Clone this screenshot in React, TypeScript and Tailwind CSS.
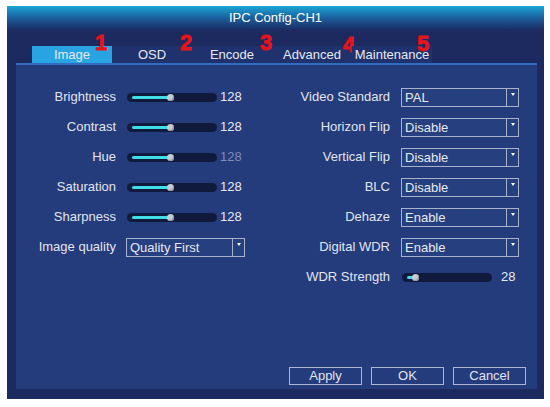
const font = { fontFamily: '"Liberation Sans", Arial, sans-serif' };

const tabs = [
  { name: "Image", mark: "1", pos: "left-[63px] top-[-14px]" },
  { name: "OSD", mark: "2", pos: "left-[68px] top-[-14px]" },
  { name: "Encode", mark: "3", pos: "left-[68px] top-[-14px]" },
  { name: "Advanced", mark: "4", pos: "left-[71px] top-[-12px]" },
  { name: "Maintenance", mark: "5", pos: "left-[65px] top-[-13px]" },
];

function Slider({ value, max = 255, dim = false, gap = "ml-[3px]" }: { value: number; max?: number; dim?: boolean; gap?: string }) {
  const fill = Math.round((value / max) * 76);
  return (
    <div className="flex items-center">
      <div className="relative h-[9px] w-[90px] rounded-full bg-[#101a3c]">
        <div className="absolute left-[5px] top-[3px] h-[3px] rounded-full bg-[#3fdde6]" style={{ width: fill }} />
        <div
          className="absolute top-[1px] h-[7px] w-[7px] rounded-full bg-[#c9ccd3] shadow-[inset_-1px_-1px_1px_#8f939c]"
          style={{ left: fill + 2 }}
        />
      </div>
      <span className={`${gap} ${dim ? "text-[#7f8db6]" : "text-[#e6e9f1]"}`}>{value}</span>
    </div>
  );
}

function Select({ value, width = "w-[118px]" }: { value: string; width?: string }) {
  return (
    <div className={`flex h-[19px] ${width} border border-[#a9b2cd] bg-[#26407f]`}>
      <span className="flex-1 pl-[3px] leading-[17px] text-[#e6e9f1]">{value}</span>
      <span className="flex w-[12px] justify-center border-l border-[#a9b2cd] pt-[4px]">
        <span className="h-0 w-0 border-x-[2px] border-t-[3px] border-x-transparent border-t-white" />
      </span>
    </div>
  );
}

function Row({ label, labelW, children }: { label: string; labelW: string; children: React.ReactNode }) {
  return (
    <div className="flex h-[30px] items-center">
      <span className={`${labelW} text-right text-[#e1e5ef]`}>{label}</span>
      {children}
    </div>
  );
}

export default function App() {
  return (
    <div className="h-[407px] w-[550px] bg-white pl-[7px] pt-[6px] text-[13px]" style={font}>
      <div className="flex h-[393px] w-[537px] flex-col bg-[#1c2a5f]">
        <div className="flex h-[24px] items-center justify-center bg-gradient-to-b from-[#1aa6d8] via-[#1a5f9c] to-[#1b2c62] text-white">
          IPC Config-CH1
        </div>

        <div className="mt-[16px] flex h-[17px] pl-[25px]">
          {tabs.map((t, i) => (
            <div
              key={t.name}
              className={`relative w-[80px] text-center leading-[17px] text-[#e6e9f1] ${
                i === 0 ? "bg-[#29a4e2]" : "bg-[#20326e]"
              }`}
            >
              {t.name}
              <span
                className={`absolute ${t.pos} text-[22px] font-bold leading-none text-[#e5141b] [-webkit-text-stroke:0.8px_#e5141b]`}
              >
                {t.mark}
              </span>
            </div>
          ))}
        </div>

        <div className="ml-[9px] mr-[7px] flex h-[326px] flex-col border-t-2 border-[#2f6cbd] bg-[#243b7c]">
          <div className="flex pt-[17px]">
            <div className="flex w-[256px] flex-col">
              <Row label="Brightness" labelW="w-[100px]">
                <div className="ml-[11px]"><Slider value={128} /></div>
              </Row>
              <Row label="Contrast" labelW="w-[100px]">
                <div className="ml-[11px]"><Slider value={128} /></div>
              </Row>
              <Row label="Hue" labelW="w-[100px]">
                <div className="ml-[11px]"><Slider value={128} dim /></div>
              </Row>
              <Row label="Saturation" labelW="w-[100px]">
                <div className="ml-[11px]"><Slider value={128} /></div>
              </Row>
              <Row label="Sharpness" labelW="w-[100px]">
                <div className="ml-[11px]"><Slider value={128} /></div>
              </Row>
              <Row label="Image quality" labelW="w-[100px]">
                <div className="ml-[10px]"><Select value="Quality First" width="w-[119px]" /></div>
              </Row>
            </div>
            <div className="flex flex-col">
              <Row label="Video Standard" labelW="w-[118px]">
                <div className="ml-[11px]"><Select value="PAL" /></div>
              </Row>
              <Row label="Horizon Flip" labelW="w-[118px]">
                <div className="ml-[11px]"><Select value="Disable" /></div>
              </Row>
              <Row label="Vertical Flip" labelW="w-[118px]">
                <div className="ml-[11px]"><Select value="Disable" /></div>
              </Row>
              <Row label="BLC" labelW="w-[118px]">
                <div className="ml-[11px]"><Select value="Disable" /></div>
              </Row>
              <Row label="Dehaze" labelW="w-[118px]">
                <div className="ml-[11px]"><Select value="Enable" /></div>
              </Row>
              <Row label="Digital WDR" labelW="w-[118px]">
                <div className="ml-[11px]"><Select value="Enable" /></div>
              </Row>
              <Row label="WDR Strength" labelW="w-[118px]">
                <div className="ml-[12px]"><Slider value={28} gap="ml-[9px]" /></div>
              </Row>
            </div>
          </div>

          <div className="mt-auto flex justify-end gap-[9px] pb-[4px] pr-[11px]">
            {["Apply", "OK", "Cancel"].map((b) => (
              <div
                key={b}
                className="h-[18px] w-[73px] border border-[#aeb6cf] text-center leading-[16px] text-[#e1e5ef]"
              >
                {b}
              </div>
            ))}
          </div>
        </div>
      </div>
    </div>
  );
}
